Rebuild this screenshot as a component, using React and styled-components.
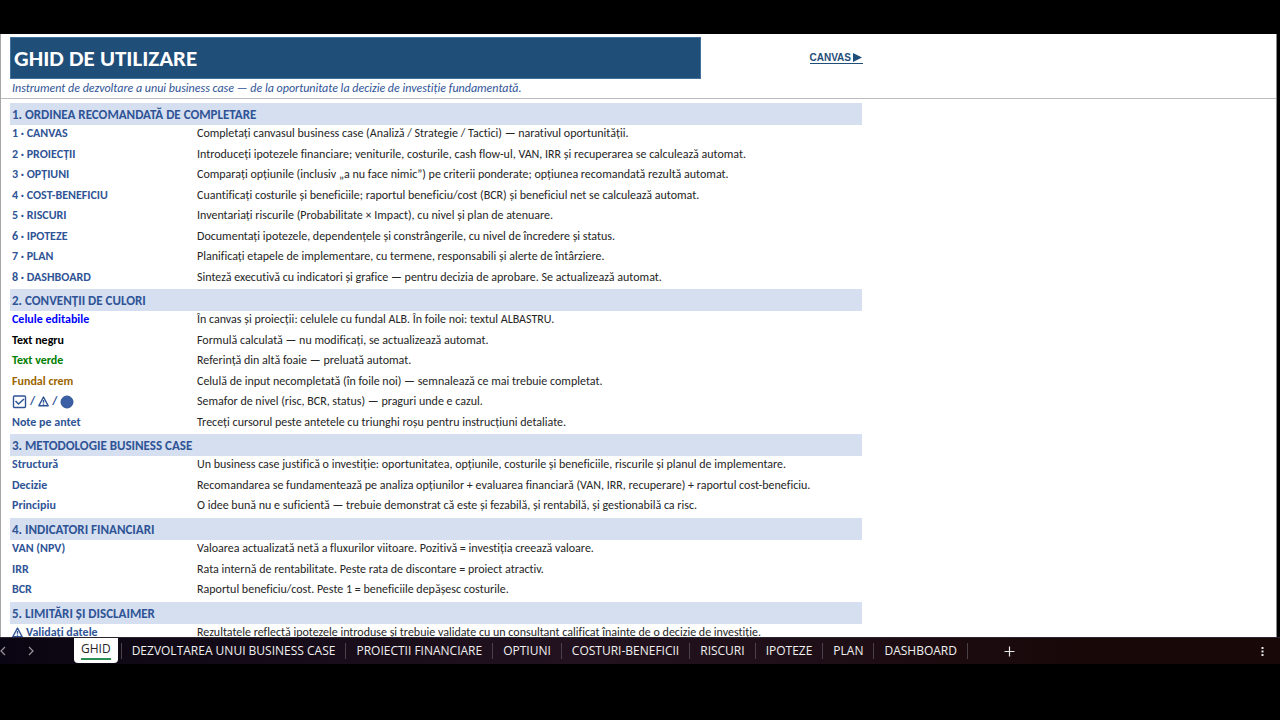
import React from 'react';
import styled, { createGlobalStyle } from 'styled-components';

const GlobalStyle = createGlobalStyle`
  * {
    box-sizing: border-box;
  }

  body {
    margin: 0;
    background: #000;
  }
`;

const Page = styled.div`
  display: flex;
  flex-direction: column;
  height: 100vh;
  padding: 34px 0 56px;
  overflow: hidden;
  font-family: Carlito, Lato, sans-serif;
  font-variant-ligatures: none;
`;

const Sheet = styled.main`
  flex: 1;
  min-height: 0;
  margin-right: 3px;
  overflow: hidden;
  background: #fff;
  border-left: 1px solid #a6a6a6;
  border-right: 1px solid #8a8a8a;
`;

const Frozen = styled.header`
  padding: 3px 0 0 9px;
  border-bottom: 1px solid #bdbdbd;
`;

const TitleRow = styled.div`
  display: flex;
  align-items: center;
  justify-content: space-between;
  max-width: 853px;
`;

const Title = styled.h1`
  flex: 1;
  max-width: 691px;
  margin: 0;
  padding: 0 3px;
  background: #1f4e79;
  border: 1px solid #41719c;
  color: #fff;
  font-size: 23px;
  font-weight: 700;
  line-height: 40px;
`;

const CanvasLink = styled.a`
  display: flex;
  align-items: center;
  gap: 2px;
  border-bottom: 1px solid #1f4e79;
  color: #1f4e79;
  font: 700 10px/11px 'Liberation Sans', Arial, sans-serif;
  text-decoration: none;
`;

const Subtitle = styled.p`
  margin: 0;
  padding: 0 2px;
  color: #2f5496;
  font-size: 12px;
  font-style: italic;
  line-height: 19px;
`;

const Guide = styled.table`
  width: calc(100% - 9px);
  max-width: 852px;
  margin: 4px 0 0 9px;
  border-collapse: collapse;
  table-layout: fixed;
  color: #262626;
  font-size: 12px;
  line-height: 17px;
`;

const LabelCol = styled.col`
  width: 185px;
`;

const Row = styled.tr`
  height: 20px;

  &:nth-child(even) {
    height: 21px;
  }
`;

const SectionRow = styled.tr`
  height: 22px;
`;

const SectionTitle = styled.th`
  padding: 0 2px;
  background: #d6dff0;
  color: #2f5496;
  font-size: 13px;
  text-align: left;
`;

const Label = styled.th`
  padding: 0 2px;
  color: ${(props) => props.$color || '#2f5496'};
  text-align: left;
  vertical-align: top;
  white-space: nowrap;
`;

const Text = styled.td`
  padding: 0 2px;
  vertical-align: top;
  white-space: nowrap;
`;

const Symbols = styled.span`
  display: flex;
  align-items: center;
  gap: 3px;
`;

const TabBar = styled.nav`
  display: flex;
  flex: none;
  align-items: center;
  height: 27px;
  background: linear-gradient(90deg, #0a0512, #22121f 45%, #1f0f18 62%, #180808 85%);
  border-top: 1px solid #2c2430;
  color: #f0f0f0;
`;

const Arrows = styled.div`
  display: flex;
  flex: none;
  justify-content: space-between;
  width: 34px;
  margin-right: 40px;
`;

const IconButton = styled.button`
  display: flex;
  padding: 0;
  background: none;
  border: none;
  color: ${(props) => (props.$dim ? '#9a949c' : '#e6e6e6')};
`;

const Tabs = styled.div`
  display: flex;
  align-items: center;
`;

const Tab = styled.button`
  padding: 0 10px;
  background: none;
  border: none;
  border-right: 1px solid #4a4248;
  color: inherit;
  font: 12px/16px 'Open Sans', 'Noto Sans', sans-serif;
  white-space: nowrap;
`;

const ActiveTab = styled(Tab)`
  align-self: flex-start;
  height: 25px;
  margin: -2px 3px 0 0;
  padding: 0 7px;
  background: #fff;
  border: none;
  border-radius: 0 0 4px 4px;
  color: #262626;

  span {
    display: block;
    padding-bottom: 1px;
    border-bottom: 2px solid #2b8f56;
  }
`;

const Divider = styled.span`
  width: 1px;
  height: 16px;
  background: #4a4248;
`;

const AddButton = styled(IconButton)`
  margin-left: 36px;
`;

const MoreButton = styled(IconButton)`
  margin: 0 16px 0 auto;
`;

const Warning = () => (
  <svg width="11" height="11" viewBox="0 0 11 11" fill="none" stroke="#2f5496" strokeWidth="1.4" strokeLinejoin="round">
    <path d="M5.5 1 L10.2 9.8 H0.8 Z" />
    <path d="M5.5 4 V6.8 M5.5 7.6 V8.8" />
  </svg>
);

const Check = () => (
  <svg width="15" height="14" viewBox="0 0 15 14" fill="none" stroke="#2f5496">
    <rect x="1.5" y="1" width="12" height="11.5" rx="1" strokeWidth="1.4" />
    <path d="M3.5 6 L6.5 9 L12 4" strokeWidth="1.5" />
  </svg>
);

const Circle = () => (
  <svg width="14" height="14" viewBox="0 0 14 14">
    <circle cx="7" cy="7" r="6" fill="#3a5fa5" stroke="#2f5496" />
  </svg>
);

const Chevron = ({ d }) => (
  <svg width="6" height="10" viewBox="0 0 6 10" fill="none" stroke="currentColor" strokeWidth="1.2">
    <path d={d} />
  </svg>
);

const sections = [
  {
    title: '1. ORDINEA RECOMANDATĂ DE COMPLETARE',
    rows: [
      ['1 · CANVAS', 'Completați canvasul business case (Analiză / Strategie / Tactici) — narativul oportunității.'],
      ['2 · PROIECȚII', 'Introduceți ipotezele financiare; veniturile, costurile, cash flow-ul, VAN, IRR și recuperarea se calculează automat.'],
      ['3 · OPȚIUNI', 'Comparați opțiunile (inclusiv „a nu face nimic”) pe criterii ponderate; opțiunea recomandată rezultă automat.'],
      ['4 · COST-BENEFICIU', 'Cuantificați costurile și beneficiile; raportul beneficiu/cost (BCR) și beneficiul net se calculează automat.'],
      ['5 · RISCURI', 'Inventariați riscurile (Probabilitate × Impact), cu nivel și plan de atenuare.'],
      ['6 · IPOTEZE', 'Documentați ipotezele, dependențele și constrângerile, cu nivel de încredere și status.'],
      ['7 · PLAN', 'Planificați etapele de implementare, cu termene, responsabili și alerte de întârziere.'],
      ['8 · DASHBOARD', 'Sinteză executivă cu indicatori și grafice — pentru decizia de aprobare. Se actualizează automat.'],
    ],
  },
  {
    title: '2. CONVENȚII DE CULORI',
    rows: [
      ['Celule editabile', 'În canvas și proiecții: celulele cu fundal ALB. În foile noi: textul ALBASTRU.', '#0000ff'],
      ['Text negru', 'Formulă calculată — nu modificați, se actualizează automat.', '#000'],
      ['Text verde', 'Referință din altă foaie — preluată automat.', '#008000'],
      ['Fundal crem', 'Celulă de input necompletată (în foile noi) — semnalează ce mai trebuie completat.', '#9c6500'],
      [
        <Symbols>
          <Check />
          /
          <Warning />
          /
          <Circle />
        </Symbols>,
        'Semafor de nivel (risc, BCR, status) — praguri unde e cazul.',
      ],
      ['Note pe antet', 'Treceți cursorul peste antetele cu triunghi roșu pentru instrucțiuni detaliate.'],
    ],
  },
  {
    title: '3. METODOLOGIE BUSINESS CASE',
    rows: [
      ['Structură', 'Un business case justifică o investiție: oportunitatea, opțiunile, costurile și beneficiile, riscurile și planul de implementare.'],
      ['Decizie', 'Recomandarea se fundamentează pe analiza opțiunilor + evaluarea financiară (VAN, IRR, recuperare) + raportul cost-beneficiu.'],
      ['Principiu', 'O idee bună nu e suficientă — trebuie demonstrat că este și fezabilă, și rentabilă, și gestionabilă ca risc.'],
    ],
  },
  {
    title: '4. INDICATORI FINANCIARI',
    rows: [
      ['VAN (NPV)', 'Valoarea actualizată netă a fluxurilor viitoare. Pozitivă = investiția creează valoare.'],
      ['IRR', 'Rata internă de rentabilitate. Peste rata de discontare = proiect atractiv.'],
      ['BCR', 'Raportul beneficiu/cost. Peste 1 = beneficiile depășesc costurile.'],
    ],
  },
  {
    title: '5. LIMITĂRI ȘI DISCLAIMER',
    rows: [
      [
        <Symbols>
          <Warning />
          Validați datele
        </Symbols>,
        'Rezultatele reflectă ipotezele introduse și trebuie validate cu un consultant calificat înainte de o decizie de investiție.',
      ],
    ],
  },
];

const tabs = [
  'DEZVOLTAREA UNUI BUSINESS CASE',
  'PROIECTII FINANCIARE',
  'OPTIUNI',
  'COSTURI-BENEFICII',
  'RISCURI',
  'IPOTEZE',
  'PLAN',
  'DASHBOARD',
];

const App = () => (
  <Page>
    <GlobalStyle />
    <Sheet>
      <Frozen>
        <TitleRow>
          <Title>GHID DE UTILIZARE</Title>
          <CanvasLink href="#canvas">
            CANVAS
            <svg width="10" height="9" viewBox="0 0 10 9">
              <path d="M0 0 L9 4.5 L0 9 Z" fill="#1f4e79" />
            </svg>
          </CanvasLink>
        </TitleRow>
        <Subtitle>
          Instrument de dezvoltare a unui business case — de la oportunitate la decizie de investiție fundamentată.
        </Subtitle>
      </Frozen>
      <Guide>
        <colgroup>
          <LabelCol />
          <col />
        </colgroup>
        {sections.map((section) => (
          <tbody key={section.title}>
            <SectionRow>
              <SectionTitle colSpan={2} scope="rowgroup">{section.title}</SectionTitle>
            </SectionRow>
            {section.rows.map(([label, text, color]) => (
              <Row key={text}>
                <Label scope="row" $color={color}>{label}</Label>
                <Text>{text}</Text>
              </Row>
            ))}
          </tbody>
        ))}
      </Guide>
    </Sheet>
    <TabBar>
      <Arrows>
        <IconButton $dim aria-label="Foaia anterioară">
          <Chevron d="M5 1 L1 5 L5 9" />
        </IconButton>
        <IconButton $dim aria-label="Foaia următoare">
          <Chevron d="M1 1 L5 5 L1 9" />
        </IconButton>
      </Arrows>
      <Tabs>
        <ActiveTab><span>GHID</span></ActiveTab>
        <Divider />
        {tabs.map((tab) => <Tab key={tab}>{tab}</Tab>)}
      </Tabs>
      <AddButton aria-label="Foaie nouă">
        <svg width="11" height="11" viewBox="0 0 11 11" stroke="currentColor" strokeWidth="1.2">
          <path d="M5.5 0.5 V10.5 M0.5 5.5 H10.5" />
        </svg>
      </AddButton>
      <MoreButton aria-label="Mai multe opțiuni">
        <svg width="3" height="11" viewBox="0 0 3 11" fill="currentColor">
          <path d="M0.5 1 h2 v2 h-2 Z M0.5 4.5 h2 v2 h-2 Z M0.5 8 h2 v2 h-2 Z" />
        </svg>
      </MoreButton>
    </TabBar>
  </Page>
);

export default App;
